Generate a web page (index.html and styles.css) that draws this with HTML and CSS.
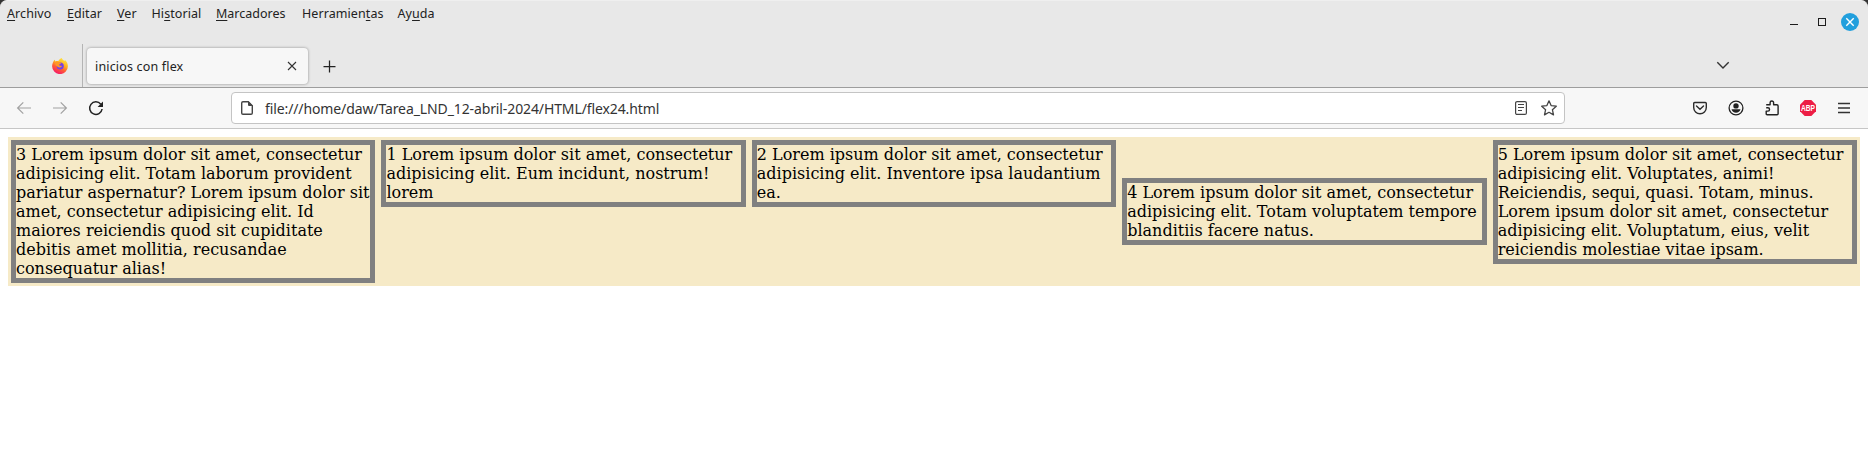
FILE: index.html
```html
<!DOCTYPE html>
<html lang="es">
<head>
<meta charset="utf-8">
<title>inicios con flex</title>
<link rel="stylesheet" href="styles.css">
</head>
<body>
<div class="window">
  <header class="top">
    <nav class="menubar">
      <span class="m1"><u>A</u>rchivo</span>
      <span class="m2"><u>E</u>ditar</span>
      <span class="m3"><u>V</u>er</span>
      <span class="m4">Hi<u>s</u>torial</span>
      <span class="m5"><u>M</u>arcadores</span>
      <span class="m6">Herramien<u>t</u>as</span>
      <span class="m7">Ay<u>u</u>da</span>
      <svg class="winctl" width="72" height="20" viewBox="0 0 72 20">
        <path d="M2 12.5h8" stroke="#1c1c1c"/>
        <rect x="30.5" y="6.5" width="7" height="7" fill="none" stroke="#1c1c1c"/>
        <circle cx="62" cy="10" r="9" fill="#219fdd"/>
        <path d="M58.3 6.3l7.4 7.4m0-7.4l-7.4 7.4" stroke="#fff" stroke-width="1.4"/>
      </svg>
    </nav>
    <div class="tabs">
      <div class="pinned">
        <svg width="16" height="16" viewBox="0 0 16 16">
          <defs>
            <linearGradient id="fox" x1=".8" y1="0" x2=".3" y2="1"><stop offset="0" stop-color="#fff04a"/><stop offset=".4" stop-color="#ffb01f"/><stop offset=".65" stop-color="#ff5b36"/><stop offset="1" stop-color="#f5156c"/></linearGradient>
          </defs>
          <path d="M9.8 0c.4 1.5 1.6 2 2.5 3l.7-1c1.800 1.500 2.900 3.800 2.900 6.200A7.900 7.900 0 0 1 .1 8.200C.1 5.700 1.200 3.300 2.700 1.700l.7 1.700c1-.5 2-.6 3-.4C7 1.600 8.200.5 9.800 0z" fill="url(#fox)"/>
          <circle cx="8.200" cy="8" r="3.600" fill="#7542e5"/>
          <path d="M2.800 4.200c1.500-.9 3.200-.8 4.400.1l1.900.7c0 1-1.400 1-1.900 1.500-.3.800.4 1.300 1.300 1.200 1-.1 1.500.4 1.300.9-1 1.300-3.200 1-4.500-.1C4 8 3.100 6.500 2.800 4.200z" fill="#ff9626"/>
        </svg>
      </div>
      <div class="tab">
        <span class="tabname">inicios con flex</span>
        <svg width="10" height="10" viewBox="0 0 10 10"><path d="M1 1l8 8m0-8L1 9" stroke="#333" stroke-width="1.1"/></svg>
      </div>
      <svg class="plus" width="13" height="13" viewBox="0 0 13 13"><path d="M6.500 .5v12M.5 6.500h12" stroke="#222" stroke-width="1.250"/></svg>
      <svg class="chev" width="14" height="9" viewBox="0 0 14 9"><path d="M1.300 1.300L7 7l5.700-5.700" fill="none" stroke="#333" stroke-width="1.400"/></svg>
    </div>
  </header>
  <div class="toolbar">
    <div class="navigation">
      <svg width="16" height="16" viewBox="0 0 16 16" fill="none" stroke="#a2a2a2" stroke-width="1.200"><path d="M15 8H2M7.300 2.300L1.600 8l5.700 5.700"/></svg>
      <svg width="16" height="16" viewBox="0 0 16 16" fill="none" stroke="#a2a2a2" stroke-width="1.200"><path d="M1 8h13M8.700 2.300L14.400 8l-5.700 5.700"/></svg>
      <svg width="16" height="16" viewBox="0 0 16 16"><path d="M12.800 4.200A6.250 6.250 0 1 0 14.100 9" fill="none" stroke="#222" stroke-width="1.500"/><path d="M15 1.400v5.100q0 .5-.5.500H9.600z" fill="#222"/></svg>
    </div>
    <div class="urlbar">
      <svg class="page" width="14" height="16" viewBox="0 0 14 16"><path d="M3 1.700h5.300L12.300 5.700v7.300q0 1.300-1.300 1.300H3q-1.300 0-1.300-1.300V3q0-1.300 1.300-1.300z" fill="none" stroke="#444" stroke-width="1.400"/><path d="M8 1l5 5H9q-1 0-1-1z" fill="#444"/></svg>
      <span class="url">file:///home/daw/Tarea_LND_12-abril-2024/HTML/flex24.html</span>
      <svg width="14" height="16" viewBox="0 0 14 16" fill="none" stroke="#444" stroke-width="1.200"><rect x="1.600" y="1.600" width="10.800" height="12.800" rx="1.500"/><path d="M4 4.500h6M4 7.500h6M4 10.500h4"/></svg>
      <svg class="star" width="18" height="18" viewBox="0 0 18 18"><path d="M9 1.800l2.100 4.800 5.200.6-3.900 3.500 1.100 5.200L9 13.300l-4.500 2.600 1.100-5.200L1.700 7.200l5.200-.6z" fill="none" stroke="#444" stroke-width="1.300" stroke-linejoin="round"/></svg>
    </div>
    <div class="actions">
      <svg width="16" height="16" viewBox="0 0 16 16" fill="none" stroke="#2c2c2c" stroke-width="1.400"><path d="M2.700 2.500h10.600q1 0 1 1V7.500a6.300 6.300 0 0 1-12.600 0V3.500q0-1 1-1z"/><path d="M4.500 6L8 9.300 11.500 6" stroke-linecap="round"/></svg>
      <svg width="16" height="16" viewBox="0 0 16 16"><circle cx="8" cy="8" r="6.900" fill="none" stroke="#222" stroke-width="1.300"/><circle cx="8" cy="5.900" r="2.700" fill="#222"/><path d="M3.500 9.300h9c-.5 2.100-2.400 3.500-4.500 3.500s-4-1.400-4.500-3.500z" fill="#222"/></svg>
      <svg width="16" height="16" viewBox="0 0 16 16"><path d="M2.200 4.700h3.900V2.800a1.750 1.750 0 0 1 3.500 0v1.900h3.200q1.300 0 1.300 1.300v7.700q0 1-1 1H3.200q-1 0-1-1v-2.600h1.700a1.600 1.600 0 0 0 0-3.300H2.200" fill="none" stroke="#222" stroke-width="1.400" stroke-linejoin="round"/></svg>
      <svg width="16" height="16" viewBox="0 0 16 16"><path d="M4.700 0h6.600L16 4.700v6.600L11.300 16H4.700L0 11.300V4.700z" fill="#ed1e45"/><text x="8" y="11" text-anchor="middle" textLength="14" lengthAdjust="spacingAndGlyphs" class="abp">ABP</text></svg>
      <svg width="16" height="16" viewBox="0 0 16 16"><path d="M2 3.500h12M2 8h12M2 12.500h12" stroke="#333" stroke-width="1.300"/></svg>
    </div>
  </div>
</div>
<main class="flexbox">
  <p class="item">3 Lorem ipsum dolor sit amet, consectetur adipisicing elit. Totam laborum provident pariatur aspernatur? Lorem ipsum dolor sit amet, consectetur adipisicing elit. Id maiores reiciendis quod sit cupiditate debitis amet mollitia, recusandae consequatur alias!</p>
  <p class="item">1 Lorem ipsum dolor sit amet, consectetur adipisicing elit. Eum incidunt, nostrum! lorem</p>
  <p class="item">2 Lorem ipsum dolor sit amet, consectetur adipisicing elit. Inventore ipsa laudantium ea.</p>
  <p class="item middle">4 Lorem ipsum dolor sit amet, consectetur adipisicing elit. Totam voluptatem tempore blanditiis facere natus.</p>
  <p class="item">5 Lorem ipsum dolor sit amet, consectetur adipisicing elit. Voluptates, animi! Reiciendis, sequi, quasi. Totam, minus. Lorem ipsum dolor sit amet, consectetur adipisicing elit. Voluptatum, eius, velit reiciendis molestiae vitae ipsam.</p>
</main>
</body>
</html>
```

FILE: styles.css
```css
* { box-sizing: border-box; }
html { background: #fff; }
body { margin: 0; height: 455px; overflow: hidden; }
svg { display: block; flex: none; }
.window { font: 13px/16px "Noto Sans", sans-serif; color: #222; background: #333; }
.top { height: 88px; background: #e8e8e8; border-bottom: 1px solid #9d9d9d; border-top: 1px solid #efefef; border-radius: 7px 7px 0 0; }
.menubar { display: flex; height: 43px; padding: 5px 8px 0 7px; white-space: nowrap; }
.menubar span { flex: none; font-size: 12.500px; letter-spacing: .08px; }
.menubar .m5 { letter-spacing: 0; }
.menubar u { text-underline-offset: 2px; text-decoration-thickness: 1px; text-decoration-skip-ink: none; }
.m1 { width: 60px; }
.m2 { width: 50px; }
.m3 { width: 34.500px; }
.m4 { width: 64.500px; }
.m5 { width: 86px; }
.m6 { width: 95.500px; }
.winctl { margin: 6px 0 0 auto; }
.tabs { display: flex; height: 43px; }
.pinned { width: 83px; border-right: 1px solid #b4b4b4; padding: 14px 0 0 52px; flex: none; }
.tab { display: flex; align-items: center; justify-content: space-between; width: 221px; height: 36px; margin: 4px 0 0 4px; padding: 0 11px 0 8px; background: #f7f7f7; border-radius: 4px; box-shadow: 0 0 3px rgba(0,0,0,.4); }
.tabname { padding-top: 2px; font-size: 12.500px; letter-spacing: .17px; white-space: nowrap; }
.plus { margin: 16px 0 0 15px; }
.chev { margin: 17px 138px 0 auto; }
.toolbar { display: flex; align-items: center; height: 41px; background: #f7f7f7; border-bottom: 1px solid #c6c6c6; }
.navigation { display: flex; gap: 20px; width: 231px; padding-left: 16px; flex: none; }
.urlbar { display: flex; align-items: center; width: 1334px; height: 32px; padding: 0 6px 0 8px; background: #fff; border: 1px solid #c4c4c4; border-radius: 4px; flex: none; }
.url { margin: 0 auto 0 11px; padding-top: 1px; font-size: 14px; letter-spacing: -.11px; white-space: nowrap; color: #333; }
.star { margin-left: 12px; }
.actions { display: flex; gap: 20px; margin-left: 127px; }
.abp { font: bold 8.500px "Liberation Sans", sans-serif; fill: #fff; }
.flexbox { display: flex; align-items: flex-start; margin: 8px; background: #f6eac7; font: 16px/19px "DejaVu Serif", serif; color: #000; }
.item { flex: 1 1 0; min-width: 0; margin: 3px; border: 5px solid #808080; }
.middle { align-self: center; }
```
